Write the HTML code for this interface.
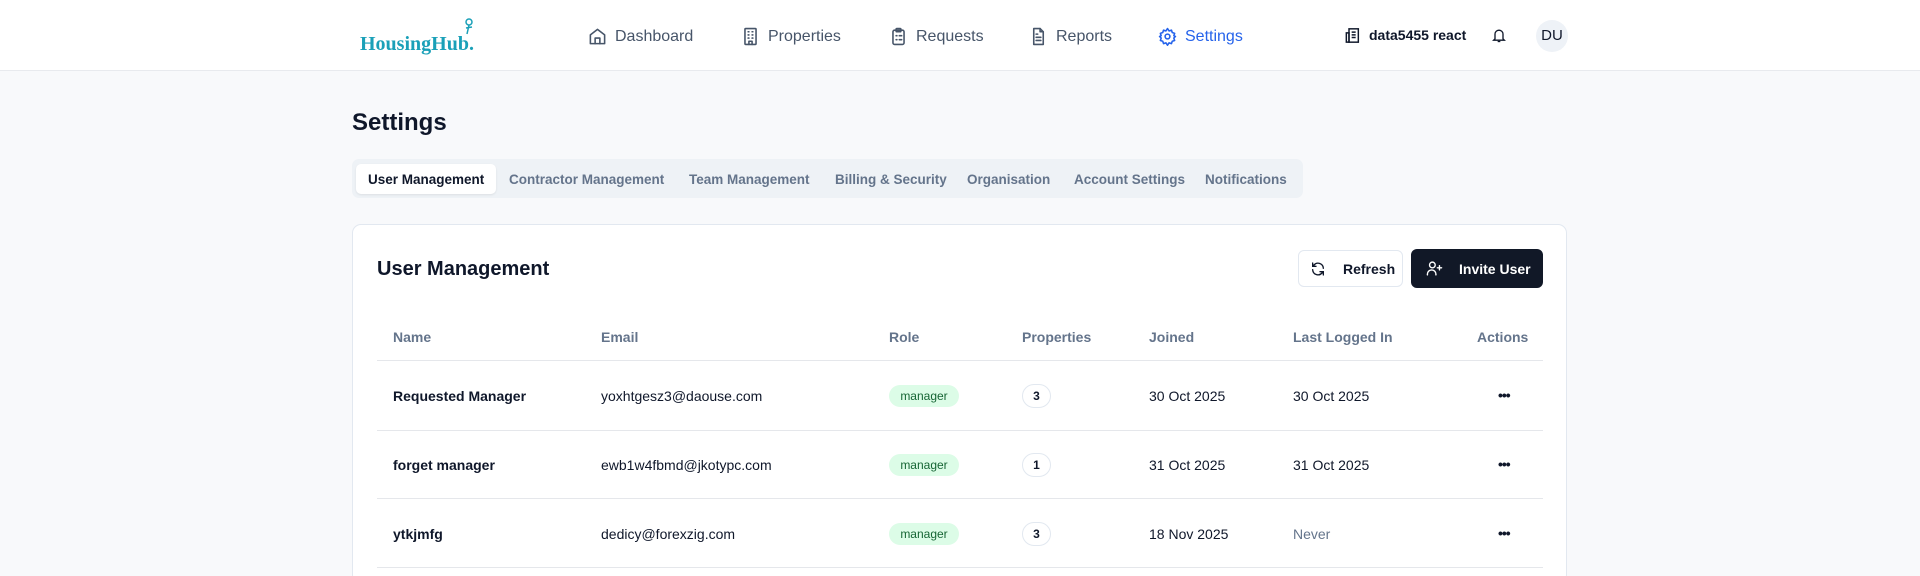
<!DOCTYPE html>
<html style="height:576px;overflow:hidden"><head><meta charset="utf-8"><style>
*{box-sizing:border-box;margin:0;padding:0}
html,body{overflow:hidden}
body{width:1920px;height:576px;background:#f8f9fb;font-family:"Liberation Sans",sans-serif;color:#0f172a;position:relative}
.hdr{position:absolute;left:0;top:0;width:1920px;height:71px;background:#fff;border-bottom:1px solid #e8eaee}
.abs{position:absolute}
.nav{position:absolute;top:26px;font-size:16px;color:#475569;display:flex;align-items:center;gap:8px}
.nav svg{width:19px;height:19px;fill:none;stroke:currentColor;stroke-width:2;stroke-linecap:round;stroke-linejoin:round}
.tabs{position:absolute;left:352px;top:159px;width:951px;height:39px;background:#eef2f6;border-radius:7px}
.tab{position:absolute;top:12px;font-size:13.5px;color:#64748b;font-weight:bold}
.card{position:absolute;left:352px;top:224px;width:1215px;height:360px;background:#fff;border:1px solid #e2e8f0;border-radius:9px}
.th{position:absolute;top:329px;font-size:14px;color:#64748b;font-weight:bold}
.line{position:absolute;left:377px;width:1166px;height:1px;background:#e5e7eb}
.td{position:absolute;font-size:14px;color:#0f172a}
.badge{position:absolute;left:889px;width:70px;height:22px;border-radius:11px;background:#dcfce7;color:#166534;font-size:12px;text-align:center;line-height:22px}
.pill{position:absolute;left:1022px;width:29px;height:24px;border-radius:12px;border:1px solid #e2e8f0;font-size:12px;font-weight:bold;text-align:center;line-height:22px}
.dots{position:absolute;left:1498px;font-size:14px;font-weight:bold;letter-spacing:-1px}
</style></head><body>
<div class="hdr"></div>
<div class="abs" style="left:360px;top:33px;font-family:'Liberation Serif',serif;font-size:20px;font-weight:bold;color:#1aa0b8">HousingHub.</div>
<svg class="abs" style="left:462px;top:17px" width="14" height="18" viewBox="0 0 14 18"><g fill="none" stroke="#1aa0b8" stroke-width="1.5"><circle cx="7" cy="5" r="3"/><path d="M7 8 L5 17 M4 11 L10 10"/></g></svg>
<div class="nav" style="left:588px;top:27px"><svg viewBox="0 0 24 24"><path d="M3 10l9-7 9 7v11H3z"/><path d="M9 21v-7h6v7"/></svg><span>Dashboard</span></div>
<div class="nav" style="left:741px;top:27px"><svg viewBox="0 0 24 24"><rect x="5" y="2" width="14" height="20" rx="1"/><path d="M9 6h1M14 6h1M9 10h1M14 10h1M9 14h1M14 14h1M10 22v-4h4v4"/></svg><span>Properties</span></div>
<div class="nav" style="left:889px;top:27px"><svg viewBox="0 0 24 24"><rect x="5" y="4" width="14" height="18" rx="2"/><rect x="9" y="2" width="6" height="4" rx="1"/><path d="M9 11h1M13 11h3M9 16h1M13 16h3"/></svg><span>Requests</span></div>
<div class="nav" style="left:1029px;top:27px"><svg viewBox="0 0 24 24"><path d="M14 2H6v20h12V6z"/><path d="M14 2v4h4M9 13h6M9 17h6M9 9h2"/></svg><span>Reports</span></div>
<div class="nav" style="left:1158px;top:27px;color:#2563eb"><svg viewBox="0 0 24 24"><circle cx="12" cy="12" r="3"/><path d="M12 2l2 3 3-1 1 3 3 1-1 3 2 1-2 2 1 3-3 1-1 3-3-1-2 3-2-3-3 1-1-3-3-1 1-3-2-2 2-1-1-3 3-1 1-3 3 1z"/></svg><span>Settings</span></div>
<svg class="abs" style="left:1345px;top:27px" width="16" height="17" viewBox="0 0 24 24" fill="none" stroke="#0f172a" stroke-width="2.2"><rect x="6" y="2" width="14" height="20"/><path d="M2 8h4v14H2zM10 7h6M10 11h6M10 15h6"/></svg>
<div class="abs" style="left:1369px;top:27px;font-size:14px;font-weight:bold">data5455 react</div>
<svg class="abs" style="left:1491px;top:27px" width="16" height="17" viewBox="0 0 24 24" fill="none" stroke="#0f172a" stroke-width="2"><path d="M6 17V10a6 6 0 0112 0v7l2 2H4z"/><path d="M10 21h4"/></svg>
<div class="abs" style="left:1536px;top:20px;width:32px;height:32px;border-radius:50%;background:#eef2f7;font-size:15px;text-align:center;line-height:32px">DU</div>

<div class="abs" style="left:352px;top:109px;font-size:24px;font-weight:bold">Settings</div>
<div class="tabs"></div>
<div class="abs" style="left:356px;top:164px;width:140px;height:30px;background:#fff;border-radius:5px;box-shadow:0 1px 2px rgba(0,0,0,.08)"></div>
<div class="tab" style="left:368px;top:172px;color:#0f172a">User Management</div>
<div class="tab" style="left:509px;top:172px">Contractor Management</div>
<div class="tab" style="left:689px;top:172px">Team Management</div>
<div class="tab" style="left:835px;top:172px">Billing &amp; Security</div>
<div class="tab" style="left:967px;top:172px">Organisation</div>
<div class="tab" style="left:1074px;top:172px">Account Settings</div>
<div class="tab" style="left:1205px;top:172px">Notifications</div>

<div class="card"></div>
<div class="abs" style="left:377px;top:258px;font-size:20px;font-weight:bold">User Management</div>
<div class="abs" style="left:1298px;top:250px;width:105px;height:37px;border:1px solid #e2e8f0;border-radius:6px;background:#fff"></div>
<svg class="abs" style="left:1310px;top:261px" width="16" height="16" viewBox="0 0 24 24" fill="none" stroke="#0f172a" stroke-width="2" stroke-linecap="round"><path d="M20 11a8 8 0 00-14-5L4 8M4 3v5h5M4 13a8 8 0 0014 5l2-2M20 21v-5h-5"/></svg>
<div class="abs" style="left:1343px;top:261px;font-size:14px;font-weight:bold">Refresh</div>
<div class="abs" style="left:1411px;top:249px;width:132px;height:39px;border-radius:6px;background:#111827"></div>
<svg class="abs" style="left:1426px;top:260px" width="17" height="17" viewBox="0 0 24 24" fill="none" stroke="#fff" stroke-width="2" stroke-linecap="round"><circle cx="9" cy="7" r="4"/><path d="M2 21v-1a6 6 0 0112 0v1M19 8v6M16 11h6"/></svg>
<div class="abs" style="left:1459px;top:261px;font-size:14px;font-weight:bold;color:#fff">Invite User</div>

<div class="th" style="left:393px">Name</div>
<div class="th" style="left:601px">Email</div>
<div class="th" style="left:889px">Role</div>
<div class="th" style="left:1022px">Properties</div>
<div class="th" style="left:1149px">Joined</div>
<div class="th" style="left:1293px">Last Logged In</div>
<div class="th" style="left:1477px">Actions</div>
<div class="line" style="top:360px"></div>
<div class="line" style="top:430px"></div>
<div class="line" style="top:498px"></div>
<div class="line" style="top:567px"></div>

<div class="td" style="left:393px;top:388px;font-weight:bold">Requested Manager</div>
<div class="td" style="left:601px;top:388px">yoxhtgesz3@daouse.com</div>
<div class="badge" style="top:385px">manager</div>
<div class="pill" style="top:384px">3</div>
<div class="td" style="left:1149px;top:388px">30 Oct 2025</div>
<div class="td" style="left:1293px;top:388px">30 Oct 2025</div>
<div class="dots" style="top:387px">•••</div>

<div class="td" style="left:393px;top:457px;font-weight:bold">forget manager</div>
<div class="td" style="left:601px;top:457px">ewb1w4fbmd@jkotypc.com</div>
<div class="badge" style="top:454px">manager</div>
<div class="pill" style="top:453px">1</div>
<div class="td" style="left:1149px;top:457px">31 Oct 2025</div>
<div class="td" style="left:1293px;top:457px">31 Oct 2025</div>
<div class="dots" style="top:456px">•••</div>

<div class="td" style="left:393px;top:526px;font-weight:bold">ytkjmfg</div>
<div class="td" style="left:601px;top:526px">dedicy@forexzig.com</div>
<div class="badge" style="top:523px">manager</div>
<div class="pill" style="top:522px">3</div>
<div class="td" style="left:1149px;top:526px">18 Nov 2025</div>
<div class="td" style="left:1293px;top:526px;color:#64748b">Never</div>
<div class="dots" style="top:525px">•••</div>
</body></html>
